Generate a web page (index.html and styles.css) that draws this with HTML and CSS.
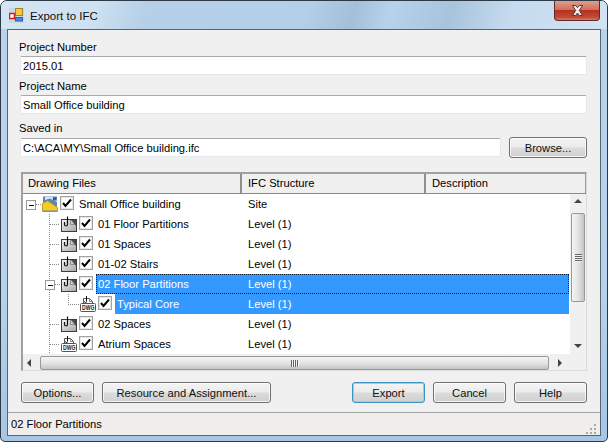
FILE: index.html
```html
<!DOCTYPE html>
<html lang="en">
<head>
<meta charset="utf-8">
<title>Export to IFC</title>
<link rel="stylesheet" href="styles.css">
</head>
<body>
<svg class="defs" width="0" height="0" aria-hidden="true">
  <defs>
    <linearGradient id="xbody" x1="0" y1="0" x2="1" y2="1"><stop offset="0" stop-color="#f6f6f6"/><stop offset="1" stop-color="#a4a4a4"/></linearGradient>
    <symbol id="xref" viewBox="0 0 16 16">
      <rect x="0.5" y="3.5" width="15" height="12" fill="url(#xbody)" stroke="#3c3c3c"/>
      <path d="M10 4h5v6z" fill="#4c4c4c"/>
      <path d="M9.500 4v4.500H14" fill="none" stroke="#8a8a8a"/>
      <path d="M6.500 0.500v8c0 2-3 2-3 0V6" fill="none" stroke="#111" stroke-width="1.200"/>
    </symbol>
    <symbol id="dwg" viewBox="0 0 16 16">
      <path d="M3.500 8V2.500h6l3 3V8" fill="#fff" stroke="#555"/>
      <path d="M9.500 2.500v3h3" fill="none" stroke="#888"/>
      <path d="M6.500 0v5.500c0 1.500-2 1.500-2 0" fill="none" stroke="#111"/>
      <rect x="0.5" y="7.500" width="15" height="8" rx="1" fill="#fff" stroke="#555"/>
      <text x="2" y="14" class="dwgtext" textLength="12.500" lengthAdjust="spacingAndGlyphs">DWG</text>
    </symbol>
    <symbol id="tick" viewBox="0 0 10 10">
      <path d="M1 5l2.500 3L9 1.500" fill="none" stroke="#000" stroke-width="2"/>
    </symbol>
  </defs>
</svg>
<div class="window">
  <header class="titlebar">
    <svg class="appicon" width="15" height="15" viewBox="0 0 15 15" aria-hidden="true">
      <rect x="0" y="0" width="15" height="15" fill="#c4ccd4" opacity=".55"/>
      <rect x="6.500" y="0.500" width="7" height="7" fill="#f6c73a" stroke="#a88322"/>
      <rect x="0.500" y="5.500" width="5" height="5" fill="#fff" stroke="#c8201c" stroke-width="1.500"/>
      <rect x="6.500" y="9.500" width="7" height="3.500" fill="#4f86d8" stroke="#2f5fa8"/>
    </svg>
    <span class="title">Export to IFC</span>
    <div class="close">
      <svg width="13" height="11" viewBox="0 0 13 11" aria-hidden="true">
        <path d="M1.500 0.500h3l2 2.200 2-2.200h3L8.300 5.500l3.200 5h-3l-2-2.500-2 2.500h-3l3.200-5z" fill="#f4f4f4" stroke="#5a3030"/>
      </svg>
    </div>
  </header>
  <main class="client">
    <div class="form">
      <div class="label first">Project Number</div>
      <div class="input">2015.01</div>
      <div class="label">Project Name</div>
      <div class="input">Small Office building</div>
      <div class="label third">Saved in</div>
      <div class="pathrow">
        <div class="input grow">C:\ACA\MY\Small Office building.ifc</div>
        <div class="btn browse">Browse...</div>
      </div>

      <section class="tree">
        <div class="thead">
          <div class="th c1">Drawing Files</div>
          <div class="th c2">IFC Structure</div>
          <div class="th c3">Description</div>
        </div>
        <div class="tmain">
          <div class="rows">
            <svg class="lines" width="70" height="160" viewBox="0 0 70 160" aria-hidden="true">
              <g class="dots">
                <path d="M26.500 20V160"/>
                <path d="M13 10.500h6"/>
                <path d="M27 30.500h10M27 50.500h10M27 70.500h10M27 130.500h10M27 150.500h10"/>
                <path d="M32 90.500h5"/>
                <path d="M45.500 100v10.500h11"/>
              </g>
              <g class="exp">
                <rect x="3.500" y="6.500" width="9" height="9"/>
                <path d="M5.500 11h5"/>
                <rect x="22.500" y="86.500" width="9" height="9"/>
                <path d="M24.500 91h5"/>
              </g>
            </svg>
            <div class="row lv0">
              <svg class="icon root" width="16" height="17" viewBox="0 0 16 17" aria-hidden="true">
                <path d="M1 8V1.500h14V13H1z" fill="#5f87b4"/>
                <path d="M3 2h7l5 4v1L8 3.500 3 5z" fill="#dbe8f3"/>
                <path d="M11 2.500h3v3h-3z" fill="#2f5a8c"/>
                <path d="M0.500 16.500V8.500L5.500 6l10 6.500v4z" fill="#f5cc24" stroke="#c29c1c"/>
                <path d="M1 16.500h14v-1H1z" fill="#6a86b8"/>
              </svg>
              <span class="check"><svg width="10" height="10"><use href="#tick"/></svg></span>
              <div class="cell"><span class="name">Small Office building</span><span>Site</span></div>
            </div>
            <div class="row lv1">
              <svg class="icon" width="16" height="16"><use href="#xref"/></svg>
              <span class="check"><svg width="10" height="10"><use href="#tick"/></svg></span>
              <div class="cell"><span class="name">01 Floor Partitions</span><span>Level (1)</span></div>
            </div>
            <div class="row lv1">
              <svg class="icon" width="16" height="16"><use href="#xref"/></svg>
              <span class="check"><svg width="10" height="10"><use href="#tick"/></svg></span>
              <div class="cell"><span class="name">01 Spaces</span><span>Level (1)</span></div>
            </div>
            <div class="row lv1">
              <svg class="icon" width="16" height="16"><use href="#xref"/></svg>
              <span class="check"><svg width="10" height="10"><use href="#tick"/></svg></span>
              <div class="cell"><span class="name">01-02 Stairs</span><span>Level (1)</span></div>
            </div>
            <div class="row lv1">
              <svg class="icon" width="16" height="16"><use href="#xref"/></svg>
              <span class="check"><svg width="10" height="10"><use href="#tick"/></svg></span>
              <div class="cell selected focused"><span class="name">02 Floor Partitions</span><span>Level (1)</span></div>
            </div>
            <div class="row lv2">
              <svg class="icon" width="16" height="16"><use href="#dwg"/></svg>
              <span class="check"><svg width="10" height="10"><use href="#tick"/></svg></span>
              <div class="cell selected"><span class="name">Typical Core</span><span>Level (1)</span></div>
            </div>
            <div class="row lv1">
              <svg class="icon" width="16" height="16"><use href="#xref"/></svg>
              <span class="check"><svg width="10" height="10"><use href="#tick"/></svg></span>
              <div class="cell"><span class="name">02 Spaces</span><span>Level (1)</span></div>
            </div>
            <div class="row lv1">
              <svg class="icon" width="16" height="16"><use href="#dwg"/></svg>
              <span class="check"><svg width="10" height="10"><use href="#tick"/></svg></span>
              <div class="cell"><span class="name">Atrium Spaces</span><span>Level (1)</span></div>
            </div>
          </div>
          <div class="vscroll">
            <span class="arrow up"></span>
            <div class="vthumb"><span class="vgrip"></span></div>
            <span class="arrow down"></span>
          </div>
        </div>
        <div class="hscroll">
          <span class="arrow left"></span>
          <div class="hthumb"><span class="hgrip"></span></div>
          <span class="arrow right"></span>
          <span class="corner"></span>
        </div>
      </section>

      <div class="actions">
        <div class="btn options">Options...</div>
        <div class="btn resource">Resource and Assignment...</div>
        <div class="spacer"></div>
        <div class="btn action default">Export</div>
        <div class="btn action">Cancel</div>
        <div class="btn action">Help</div>
      </div>
    </div>
    <footer class="status">
      <span>02 Floor Partitions</span>
      <svg class="gripper" width="11" height="11" viewBox="0 0 11 11" aria-hidden="true">
        <path d="M8 1h2v2H8zM4 5h2v2H4zM8 5h2v2H8zM0 9h2v2H0zM4 9h2v2H4zM8 9h2v2H8z" fill="#a8a8a8"/>
      </svg>
    </footer>
  </main>
</div>
</body>
</html>
```
FILE: styles.css
```css
* { box-sizing: border-box; }
html, body { margin: 0; padding: 0; background: #fff; }
body { width: 608px; height: 442px; overflow: hidden; font: 11.2px/14px "Liberation Sans", Arial, sans-serif; color: #000; }
.defs { position: absolute; }
.dwgtext { font: bold 6.500px "Liberation Sans", sans-serif; fill: #222; }

.window {
  width: 608px; height: 442px;
  display: flex; flex-direction: column;
  padding: 0 6px 5px 6px;
  border: 1px solid #2c3a48;
  border-radius: 7px 7px 5px 5px;
  background: linear-gradient(180deg, #b8d2ea 0%, #b9d3ec 60%, #a6c6e4 100%);
}
.titlebar {
  position: relative;
  height: 28px; margin: 0 -6px; padding: 7px 0 0 8px;
  display: flex; align-items: flex-start; gap: 6px;
  border-radius: 6px 6px 0 0;
  background:
    linear-gradient(105deg, #d4e5f3 0%, #cfe2f2 15%, #b6d0e8 24%, #b4cfe8 50%, #a4c0d9 58%, #b6d2ec 64%, #a8c4dc 74%, #c6dbef 84%, #d2e3f3 100%);
}
.appicon { flex: none; }
.title { line-height: 16px; font-size: 11.500px; color: #101010; }
.close {
  position: absolute; right: 7px; top: 0;
  width: 46px; height: 20px;
  display: flex; align-items: center; justify-content: center;
  border: 1px solid #5e2a28; border-top: 0;
  border-radius: 0 0 4px 4px;
  background: linear-gradient(180deg, #e09c8c 0%, #d2705c 45%, #b83220 50%, #c04a34 85%, #d87a62 100%);
}

.client {
  flex: 1; min-height: 0;
  display: flex; flex-direction: column;
  border: 1px solid #566574;
  background: #f0f0f0;
}
.form { flex: 1; padding: 10px 13px 0 11px; display: flex; flex-direction: column; }
.label { height: 14px; margin-top: 4px; }
.label.first { margin-top: 0; }
.label.third { margin-top: 7px; }
.input {
  height: 19px; margin: 2px 0 0 1px; padding: 2px 0 0 2px;
  background: #fff;
  border: 1px solid #e2e8ee; border-top-color: #a8a8a8; border-radius: 2px;
}
.pathrow { display: flex; gap: 8px; align-items: flex-start; }
.pathrow .input { margin-top: 3px; }
.grow { flex: 1; }
.btn {
  height: 21px; display: flex; align-items: center; justify-content: center;
  border: 1px solid #707070; border-radius: 3px;
  background: linear-gradient(180deg, #f4f4f4 0%, #ebebeb 48%, #dcdcdc 52%, #cfcfcf 100%);
  box-shadow: inset 0 0 0 1px rgba(255,255,255,.75);
  color: #111;
}
.browse { width: 78px; margin-top: 2px; }

.tree {
  width: 566px; height: 199px; margin: 14px 0 0 2px;
  display: flex; flex-direction: column;
  border: 1px solid #a0a0a0; border-top-width: 2px; border-left-width: 2px;
  border-right-color: #dcdcdc; border-bottom-color: #dcdcdc;
  background: #fff;
}
.thead { height: 20px; display: flex; flex: none; background: #f0f0f0; border-bottom: 1px solid #8a8a8a; }
.th { padding: 2px 0 0 5px; border-right: 2px solid #8f8f8f; }
.c1 { width: 219px; }
.c2 { width: 184px; padding-left: 6px; }
.c3 { flex: 1; padding-left: 6px; border-right: 1px solid #9a9a9a; }

.tmain { height: 160px; display: flex; flex: none; }
.rows { position: relative; width: 547px; padding-right: 1px; }
.lines { position: absolute; left: 0; top: 0; }
.dots path { fill: none; stroke: #8a8a8a; stroke-dasharray: 1 1; shape-rendering: crispEdges; }
.exp rect { fill: #fff; stroke: #9a9a9a; shape-rendering: crispEdges; }
.exp path { stroke: #111; shape-rendering: crispEdges; }

.row { height: 20px; display: flex; position: relative; }
.lv0 { padding-left: 19px; }
.lv1 { padding-left: 38px; }
.lv2 { padding-left: 57px; }
.icon { flex: none; margin-top: 2px; }
.icon.root { margin-top: 1px; }
.check {
  flex: none; width: 14px; height: 14px; margin: 2px 3px 0 2px;
  display: flex; align-items: center; justify-content: center;
  background: #fff; border: 1px solid #a2a2a2;
  box-shadow: inset 0 0 0 1px #e6e6e6;
}
.cell { flex: 1; display: flex; padding: 3px 0 0 2px; }
.name { flex: none; }
.lv0 .name { width: 169px; }
.lv1 .name { width: 150px; }
.lv2 .name { width: 131px; }
.selected { background: #3399ff; color: #fff; }
.focused { border: 1px dotted #0a1a30; padding: 2px 0 0 1px; }

.vscroll { flex: 1; position: relative; background: #f0f0f0; }
.vthumb {
  position: absolute; left: 1px; right: 1px; top: 19px; height: 89px;
  display: flex; align-items: center; justify-content: center;
  border: 1px solid #9a9a9a; border-radius: 2px;
  background: linear-gradient(90deg, #f4f4f4, #e4e4e4 50%, #c4c4c4);
}
.vgrip { width: 7px; height: 8px; background: repeating-linear-gradient(180deg, #666 0 1px, #f0f0f0 1px 2px); }
.arrow { position: absolute; width: 0; height: 0; border: 4px solid transparent; }
.arrow.up { left: 4px; top: 5px; border-top: 0; border-bottom-color: #444; }
.arrow.down { left: 4px; bottom: 6px; border-bottom: 0; border-top-color: #444; }

.hscroll { position: relative; flex: 1; background: #f0f0f0; }
.hthumb {
  position: absolute; left: 17px; top: 2px; width: 509px; height: 14px;
  display: flex; align-items: center; justify-content: center;
  border: 1px solid #9a9a9a; border-radius: 2px;
  background: linear-gradient(180deg, #f4f4f4, #e4e4e4 50%, #c4c4c4);
}
.hgrip { width: 8px; height: 7px; background: repeating-linear-gradient(90deg, #666 0 1px, #f0f0f0 1px 2px); }
.arrow.left { left: 4px; top: 5px; border-left: 0; border-right-color: #444; }
.arrow.right { left: 535px; top: 5px; border-right: 0; border-left-color: #444; }
.corner { position: absolute; right: 0; top: 0; width: 15px; height: 100%; background: #f0f0f0; }

.actions { display: flex; gap: 8px; margin: 11px 0 0 2px; }
.options { width: 73px; }
.resource { width: 169px; }
.spacer { flex: 1; }
.action { width: 73px; }
.default { border-color: #3b93c4; box-shadow: inset 0 0 0 1px #8fd4ef; }

.status {
  height: 23px; margin-top: auto; padding: 4px 3px 0 3px;
  display: flex; justify-content: space-between;
  background: #f0eded; border-top: 1px solid #a0a0a0;
}
.gripper { margin-top: 6px; }
```
